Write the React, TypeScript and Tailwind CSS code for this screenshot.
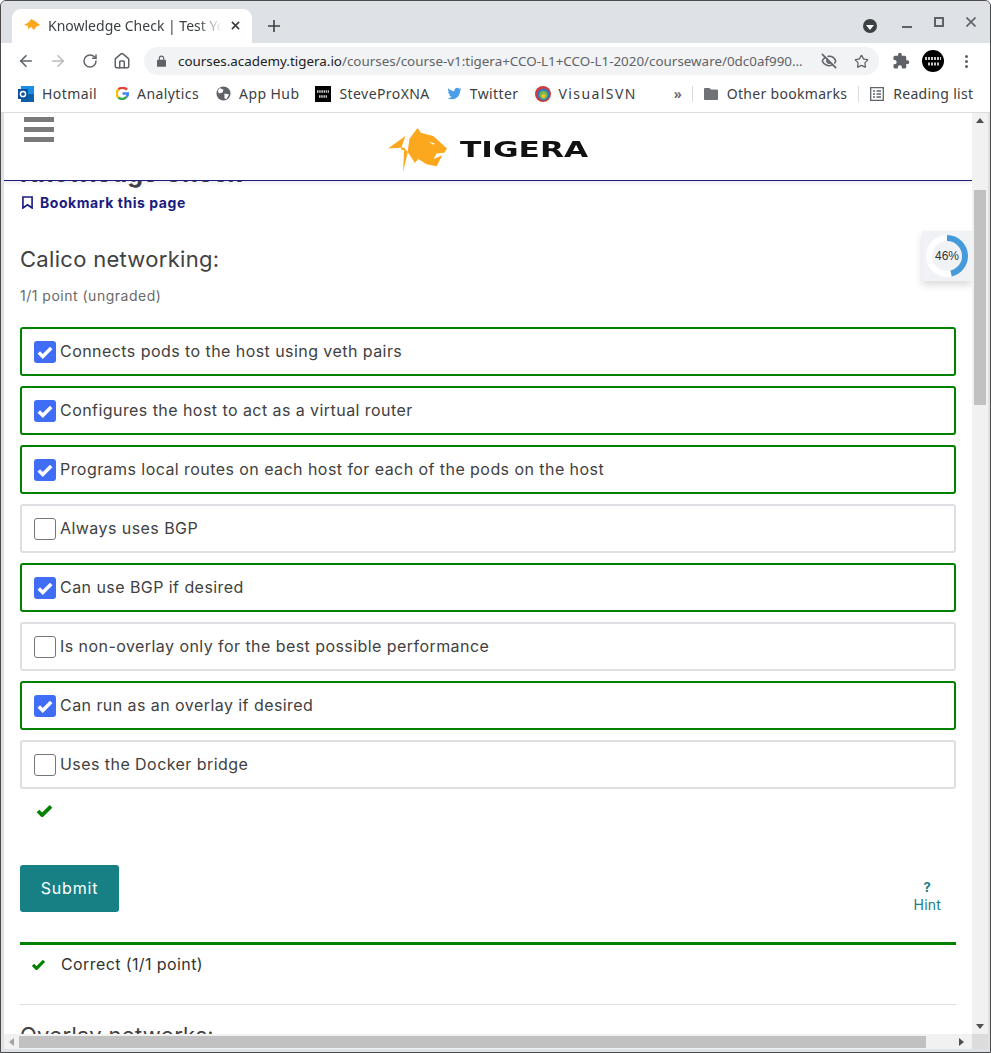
import { ArrowLeft, ArrowRight, RotateCw, Home, EyeOff, Star } from "lucide-react";

const font = "font-['Inter',sans-serif]";

const options = [
  { label: "Connects pods to the host using veth pairs", checked: true },
  { label: "Configures the host to act as a virtual router", checked: true },
  { label: "Programs local routes on each host for each of the pods on the host", checked: true },
  { label: "Always uses BGP", checked: false },
  { label: "Can use BGP if desired", checked: true },
  { label: "Is non-overlay only for the best possible performance", checked: false },
  { label: "Can run as an overlay if desired", checked: true },
  { label: "Uses the Docker bridge", checked: false },
];

function Tick({ className }: { className: string }) {
  return (
    <svg viewBox="0 0 18 14" className={className} fill="none">
      <path d="M2 7.5 L6.5 12 L16 2.5" stroke="currentColor" strokeWidth="4" />
    </svg>
  );
}

function Option({ label, checked }: { label: string; checked: boolean }) {
  return (
    <div
      className={`flex h-[49px] items-center rounded-[3px] border-2 pl-3 ${
        checked ? "border-[#008100]" : "border-[#dddfe3]"
      }`}
    >
      {checked ? (
        <div className="flex h-[22px] w-[22px] shrink-0 items-center justify-center rounded-[3px] bg-[#3f6df5]">
          <Tick className="h-[14px] w-[16px] text-white" />
        </div>
      ) : (
        <div className="h-[22px] w-[22px] shrink-0 rounded-[3px] border border-[#767676] bg-white" />
      )}
      <span className="ml-1 pb-[2px] text-[16px] tracking-[0.44px] text-[#414141]">{label}</span>
    </div>
  );
}

function Bookmark({ icon, label, className }: { icon: React.ReactNode; label: string; className: string }) {
  return (
    <div className={`flex shrink-0 items-center ${className}`}>
      <div className="flex h-4 w-4 items-center justify-center">{icon}</div>
      <span className="text-[14px] tracking-[0.42px] text-[#3c4043]">{label}</span>
    </div>
  );
}

function BrowserChrome() {
  return (
    <div className="shrink-0 font-['Noto_Sans',sans-serif]">
      {/* tab strip */}
      <div className="flex h-[42px] items-end bg-[#dee1e6] pl-[11px]">
        <div className="flex h-[34px] w-[240px] items-center rounded-t-[9px] bg-white pb-[2px] pl-[12px]">
          <svg viewBox="0 0 16 12" className="h-[12px] w-[16px]">
            <path d="M0 6 L5 3 L7 0 L11 2 L16 6 L12 8 L10 11 L7 8 L4 10 L4 7 Z" fill="#fba81f" />
          </svg>
          <span className="ml-[8px] w-[174px] text-[14px] whitespace-nowrap text-[#3c4043] [mask-image:linear-gradient(to_right,black_86%,transparent)] overflow-hidden">
            Knowledge Check | Test Yo
          </span>
          <svg viewBox="0 0 10 10" className="ml-[9px] h-[9px] w-[9px]" stroke="#3c4043" strokeWidth="1.8">
            <path d="M1 1 L9 9 M9 1 L1 9" />
          </svg>
        </div>
        <svg viewBox="0 0 12 12" className="mb-[11px] ml-[16px] h-3 w-3" stroke="#3c4043" strokeWidth="1.6">
          <path d="M6 0 V12 M0 6 H12" />
        </svg>
        <div className="mb-[11px] ml-auto flex h-3 items-center">
          <div className="flex h-[14px] w-[14px] items-center justify-center rounded-full bg-[#3c4043]">
            <div className="mt-[2px] h-0 w-0 border-x-[4px] border-t-[5px] border-x-transparent border-t-white" />
          </div>
          <div className="mt-[2px] ml-[25px] h-[2px] w-[10px] bg-[#5f6368]" />
          <div className="-mt-[8px] ml-[22px] h-[10px] w-[10px] border-2 border-[#5f6368]" />
          <svg viewBox="0 0 10 10" className="-mt-[8px] ml-[22px] h-[10px] w-[10px]" stroke="#5f6368" strokeWidth="1.6">
            <path d="M0.5 0.5 L9.5 9.5 M9.5 0.5 L0.5 9.5" />
          </svg>
          <div className="w-[14px]" />
        </div>
      </div>
      {/* toolbar */}
      <div className="flex h-[36px] items-center bg-white pl-[16px]">
        <ArrowLeft size={18} color="#5f6368" strokeWidth={2.2} />
        <ArrowRight size={18} color="#babcbe" strokeWidth={2.2} className="ml-[14px]" />
        <RotateCw size={16} color="#5f6368" strokeWidth={2.2} className="ml-[15px]" />
        <Home size={18} color="#5f6368" strokeWidth={2} className="ml-[15px]" />
        <div className="ml-[13px] flex h-[28px] w-[735px] items-center rounded-full bg-[#f1f3f4] pl-[13px]">
          <svg viewBox="0 0 10 13" className="h-[12px] w-[9px]" fill="#5f6368">
            <path d="M1 5 H2 V3.5 A3 3 0 0 1 8 3.5 V5 H9 A1 1 0 0 1 10 6 V12 A1 1 0 0 1 9 13 H1 A1 1 0 0 1 0 12 V6 A1 1 0 0 1 1 5 Z M3.2 5 H6.8 V3.5 A1.8 1.8 0 0 0 3.2 3.5 Z" />
          </svg>
          <span className="ml-[12px] w-[628px] shrink-0 text-[13.4px] whitespace-nowrap text-[#5f6368]">
            <span className="text-[#202124]">courses.academy.tigera.io</span>
            /courses/course-v1:tigera+CCO-L1+CCO-L1-2020/courseware/0dc0af990…
          </span>
          <EyeOff size={16} color="#5f6368" strokeWidth={2.4} className="ml-[15px]" />
          <Star size={15} color="#5f6368" strokeWidth={2} className="ml-[17px]" />
        </div>
        <svg viewBox="0 0 24 24" className="ml-[13px] h-[18px] w-[18px]" fill="#5f6368">
          <path d="M20.5 11H19V7a2 2 0 0 0-2-2h-4V3.5a2.5 2.5 0 0 0-5 0V5H4a2 2 0 0 0-2 2v3.8h1.5a2.7 2.7 0 0 1 0 5.4H2V20a2 2 0 0 0 2 2h3.8v-1.5a2.700 2.700 0 0 1 5.400 0V22H17a2 2 0 0 0 2-2v-4h1.500a2.500 2.500 0 0 0 0-5z" />
        </svg>
        <svg viewBox="0 0 22 22" className="ml-[12px] h-[22px] w-[22px]">
          <circle cx="11" cy="11" r="11" fill="#000" />
          <path d="M3 8.500 H19" stroke="#c9c9c9" strokeWidth="3" strokeDasharray="2 1" />
          <path d="M6 14 H17" stroke="#c9c9c9" strokeWidth="3" strokeDasharray="2 1" />
        </svg>
        <div className="ml-[21px] flex flex-col gap-[2px]">
          <div className="h-[3px] w-[3px] rounded-full bg-[#5f6368]" />
          <div className="h-[3px] w-[3px] rounded-full bg-[#5f6368]" />
          <div className="h-[3px] w-[3px] rounded-full bg-[#5f6368]" />
        </div>
      </div>
      {/* bookmarks bar */}
      <div className="flex h-[34px] items-center overflow-hidden border-b border-[#dadce0] bg-white pb-[4px] pl-[17px]">
        <Bookmark
          className="gap-[8px]"
          label="Hotmail"
          icon={
            <svg viewBox="0 0 16 16" className="h-4 w-4">
              <rect x="3" y="0" width="13" height="16" fill="#1a8fe3" />
              <rect x="3" y="8" width="13" height="8" fill="#0f5fa8" />
              <rect x="0" y="3" width="10" height="10" fill="#0f4fa0" />
              <circle cx="5" cy="8" r="2.600" fill="none" stroke="#fff" strokeWidth="1.500" />
            </svg>
          }
        />
        <Bookmark
          className="ml-[17px] gap-[7px]"
          label="Analytics"
          icon={
            <svg viewBox="0 0 16 16" className="h-[13px] w-[13px]" fill="none" strokeWidth="3">
              <path d="M13.5 3.5 A7 7 0 0 0 3 3" stroke="#ea4335" />
              <path d="M3 3 A7 7 0 0 0 3 13" stroke="#fbbc05" />
              <path d="M3 13 A7 7 0 0 0 13 12" stroke="#34a853" />
              <path d="M13 12 A7 7 0 0 0 15 8 H8" stroke="#4285f4" />
            </svg>
          }
        />
        <Bookmark
          className="ml-[16px] gap-[8px]"
          label="App Hub"
          icon={
            <svg viewBox="0 0 16 16" className="h-[15px] w-[15px]">
              <circle cx="8" cy="8" r="7.5" fill="#5f6368" />
              <path d="M4 2 L8 4 L7 7 L3 8 L2 5 Z M9 8 L14 9 L11 14 L9 13 Z" fill="#fff" />
            </svg>
          }
        />
        <Bookmark
          className="ml-[16px] gap-[8px]"
          label="SteveProXNA"
          icon={
            <svg viewBox="0 0 16 16" className="h-4 w-4">
              <rect width="16" height="16" fill="#000" />
              <path d="M2 5.500 H14" stroke="#c9c9c9" strokeWidth="2.500" strokeDasharray="1.500 .7" />
              <path d="M4 10.500 H12" stroke="#c9c9c9" strokeWidth="2.500" strokeDasharray="1.500 .7" />
            </svg>
          }
        />
        <Bookmark
          className="ml-[17px] gap-[7px]"
          label="Twitter"
          icon={
            <svg viewBox="0 0 24 24" className="h-[15px] w-[15px]" fill="#4a9fe8">
              <path d="M23 5c-.8.4-1.7.6-2.6.7.9-.6 1.6-1.4 2-2.5-.9.5-1.9.9-2.9 1.1a4.6 4.6 0 0 0-7.8 4.2C8 8.300 4.600 6.500 2.400 3.700a4.600 4.600 0 0 0 1.400 6.100c-.7 0-1.400-.2-2-.6 0 2.200 1.600 4.100 3.700 4.600-.7.2-1.400.2-2.100.1.600 1.800 2.300 3.100 4.300 3.200A9.300 9.300 0 0 1 1 19c2 1.300 4.400 2 7 2 8.400 0 13.100-7.100 12.800-13.500.9-.6 1.600-1.400 2.200-2.500z" />
            </svg>
          }
        />
        <Bookmark
          className="ml-[16px] gap-[8px] [&>span]:tracking-[1.4px]"
          label="VisualSVN"
          icon={
            <svg viewBox="0 0 16 16" className="h-4 w-4">
              <circle cx="8" cy="8" r="8" fill="#d23a3a" />
              <circle cx="8.500" cy="8.500" r="6" fill="#2f78c4" />
              <circle cx="8.500" cy="9" r="4.200" fill="#7ab648" />
              <circle cx="8.500" cy="10" r="2" fill="#e8c33a" />
            </svg>
          }
        />
        <span className="ml-[37px] text-[14px] leading-none font-semibold text-[#5f6368]">»</span>
        <div className="ml-[10px] h-[16px] w-px bg-[#dadce0]" />
        <svg viewBox="0 0 14 12" className="ml-[11px] h-[12px] w-[14px] shrink-0" fill="#6f7377">
          <path d="M1 0 H5.500 L7 1.500 H13 A1 1 0 0 1 14 2.500 V11 A1 1 0 0 1 13 12 H1 A1 1 0 0 1 0 11 V1 A1 1 0 0 1 1 0 Z" />
        </svg>
        <span className="ml-[9px] shrink-0 text-[14px] tracking-[0.3px] text-[#3c4043]">Other bookmarks</span>
        <div className="ml-[11px] h-[16px] w-px shrink-0 bg-[#dadce0]" />
        <svg viewBox="0 0 14 14" className="ml-[11px] h-[14px] w-[14px] shrink-0" fill="none" stroke="#5f6368" strokeWidth="1.300">
          <path d="M.7 .7 H13.300 V13.300 H.7 Z M3 4 H5 M6.500 4 H11 M3 7 H5 M6.500 7 H11 M3 10 H5 M6.500 10 H11" />
        </svg>
        <span className="ml-[9px] shrink-0 text-[14px] tracking-[0.3px] text-[#3c4043]">Reading list</span>
      </div>
    </div>
  );
}

function Header() {
  return (
    <header className="relative z-10 flex h-[68px] shrink-0 justify-center border-b border-[#1b1c80] bg-white shadow-[0_2px_4px_rgba(0,0,0,0.08)]">
      <div className="absolute top-[4px] left-[20px] flex w-[30px] flex-col gap-[5px]">
        <div className="h-[5px] bg-[#7a7a7a]" />
        <div className="h-[5px] bg-[#7a7a7a]" />
        <div className="h-[5px] bg-[#7a7a7a]" />
      </div>
      <div className="mt-[15px] flex h-[44px] w-[200px] items-center">
        <svg viewBox="10 14 176 131" className="h-[44px] w-[59px] shrink-0" fill="#fba81f">
          <path d="M10 75 L62 38 L48 78 L58 80 L55 145 L68 90 L74 46 L98 14 L108 28 L145 38 L186 75 L178 88 L155 90 L146 106 L172 95 L155 128 L125 122 L100 106 L90 118 L76 96 L58 72 Z" />
          <path d="M132 55 L150 60 L145 64 Z" fill="#fff" />
        </svg>
        <span className="ml-[13px] origin-left scale-x-[1.42] font-['DejaVu_Sans',sans-serif] text-[22px] leading-none font-bold text-[#111]">
          TIGERA
        </span>
      </div>
    </header>
  );
}

function ProgressWidget() {
  return (
    <div className="absolute top-[118px] right-0 z-20 flex h-[50px] w-[50px] items-center justify-center bg-[#f1f2f5] shadow-[0_4px_8px_rgba(0,0,0,0.15)]">
      <svg viewBox="0 0 42 42" className="h-[42px] w-[42px] -rotate-90">
        <circle cx="21" cy="21" r="18" fill="none" stroke="#ffffff" strokeWidth="6" />
        <circle
          cx="21"
          cy="21"
          r="18"
          fill="none"
          stroke="#459ad9"
          strokeWidth="6"
          strokeDasharray="52 113.100"
        />
      </svg>
      <span className="absolute font-['Liberation_Sans',sans-serif] text-[12px] text-[#333]">46%</span>
    </div>
  );
}

function Page() {
  return (
    <div className={`relative min-w-0 flex-1 overflow-hidden bg-white ${font}`}>
      <Header />
      <ProgressWidget />
      <div className="px-4">
        <h1 className="-mt-[26px] h-[36px] text-[25px] leading-[36px] font-bold text-[#41424c]">Knowledge Check</h1>
        <div className="mt-[2px] flex h-[18px] items-center">
          <svg viewBox="0 0 12 14" className="ml-[2px] h-[13px] w-[11px]" fill="none" stroke="#1b1c80" strokeWidth="1.800">
            <path d="M1 1 H11 V13 L6 9.500 L1 13 Z" />
          </svg>
          <span className="ml-[7px] text-[14px] tracking-[0.55px] font-bold text-[#1b1c80]">Bookmark this page</span>
        </div>
        <h2 className="mt-[33px] text-[22px] leading-[30px] tracking-[0.3px] text-[#414141]">Calico networking:</h2>
        <p className="mt-[12px] text-[14px] leading-[20px] tracking-[0.5px] text-[#6a6a6a]">1/1 point (ungraded)</p>
        <div className="mt-[21px] flex flex-col gap-[10px]">
          {options.map((o) => (
            <Option key={o.label} label={o.label} checked={o.checked} />
          ))}
        </div>
        <Tick className="mt-[15px] ml-[16px] h-[13px] w-[17px] text-[#008100]" />
        <div className="mt-[48px] flex h-[47px] items-start justify-between">
          <button className="h-[47px] w-[99px] rounded-[3px] bg-[#178085] pb-[2px] text-[16px] tracking-[0.8px] text-white">
            Submit
          </button>
          <div className="mt-[13px] mr-[15px] flex flex-col items-center text-[14px] leading-[18px] tracking-[0.2px] text-[#178085]">
            <span className="text-[13px] font-bold">?</span>
            <span>Hint</span>
          </div>
        </div>
        <div className="mt-[30px] flex h-[62px] items-start border-t-[3px] border-[#008100] pt-[7px]">
          <Tick className="mt-[7px] ml-[11px] h-[11px] w-[15px] text-[#008100]" />
          <span className="ml-[15px] text-[16px] leading-[24px] tracking-[0.4px] text-[#333]">Correct (1/1 point)</span>
        </div>
        <div className="h-px bg-[#dddddd]" />
        <h2 className="mt-[15px] text-[22px] leading-[30px] tracking-[0.3px] text-[#414141]">Overlay networks:</h2>
      </div>
    </div>
  );
}

export default function App() {
  return (
    <div className="flex h-[1053px] w-[991px] flex-col overflow-hidden rounded-t-[6px] border border-[#4a4a4a] bg-[#dee1e6]">
      <BrowserChrome />
      <div className="flex min-h-0 flex-1 flex-col pr-[2px] pb-[3px] pl-[3px]">
        <div className="flex min-h-0 flex-1">
          <Page />
          <div className="flex w-[16px] shrink-0 flex-col items-center bg-[#f1f1f1]">
            <div className="mt-[5px] h-0 w-0 border-x-[4px] border-b-[5px] border-x-transparent border-b-[#505050]" />
            <div className="mt-[67px] h-[215px] w-[12px] bg-[#c1c1c1]" />
            <div className="mt-auto mb-[5px] h-0 w-0 border-x-[4px] border-t-[5px] border-x-transparent border-t-[#505050]" />
          </div>
        </div>
        <div className="flex h-[15px] shrink-0 items-center bg-[#f1f1f1]">
          <div className="ml-[5px] h-0 w-0 border-y-[4px] border-r-[5px] border-y-transparent border-r-[#a3a3a3]" />
          <div className="ml-[5px] h-[12px] w-[907px] bg-[#c1c1c1]" />
          <div className="ml-[33px] h-0 w-0 border-y-[4px] border-l-[5px] border-y-transparent border-l-[#505050]" />
          <div className="ml-auto h-[15px] w-[16px] bg-[#dcdcdc]" />
        </div>
      </div>
    </div>
  );
}
